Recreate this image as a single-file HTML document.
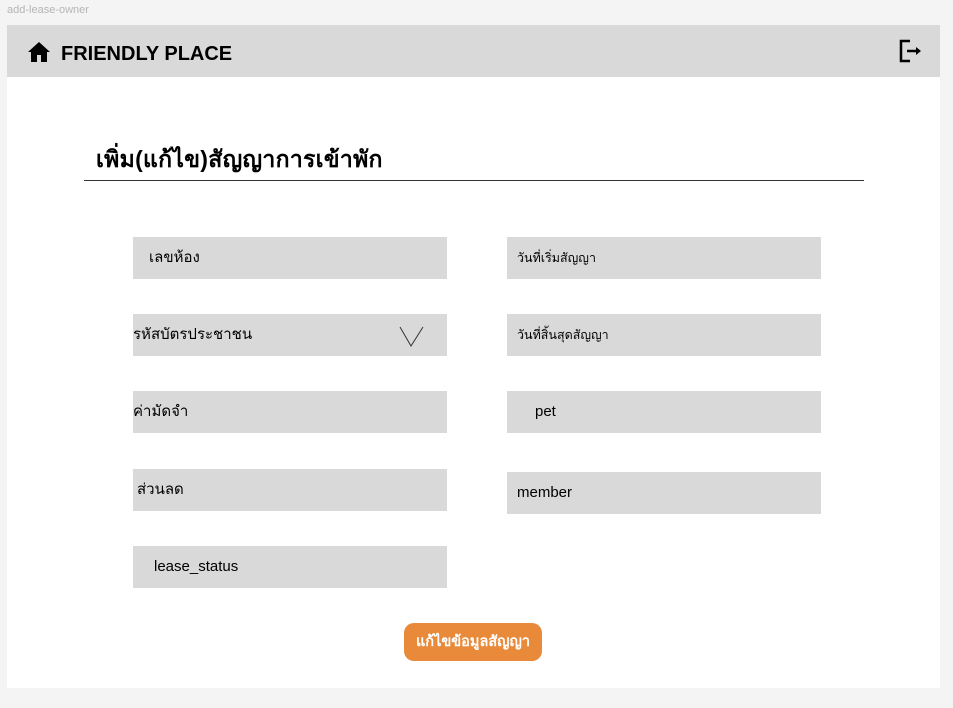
<!DOCTYPE html>
<html><head><meta charset="utf-8"><style>
body{margin:0;width:953px;height:708px;background:#f4f4f4;position:relative;overflow:hidden;font-family:"Liberation Sans","Noto Sans CJK SC",sans-serif;}
.lbl{position:absolute;left:7px;top:4px;font-size:11px;color:#b5b5b5;}
.frame{position:absolute;left:7px;top:25px;width:933px;height:663px;background:#fff;}
.hdr{position:absolute;left:0;top:0;width:933px;height:52px;background:#d9d9d9;}
.brand{position:absolute;left:54px;top:18px;font-size:20px;font-weight:bold;color:#000;}
.title{position:absolute;left:89px;top:117px;font-size:23px;font-weight:bold;color:#000;letter-spacing:0.3px;}
.line{position:absolute;left:77px;top:155px;width:780px;height:1px;background:#333;}
.f{position:absolute;background:#d9d9d9;height:42px;width:314px;font-size:15px;color:#000;line-height:42px;box-sizing:border-box;}
.s{font-size:12.5px;}
.btn{position:absolute;left:397px;top:598px;width:138px;height:38px;background:#e98a3a;border-radius:10px;color:#fff;font-weight:bold;font-size:14.5px;text-align:center;line-height:38px;}
</style></head><body>
<div class="lbl">add-lease-owner</div>
<div class="frame">
<div class="hdr">
<svg style="position:absolute;left:20px;top:16px" width="24" height="22" viewBox="0 0 24 22"><path d="M12 1 L1 11 H4 V21 H10 V14 H14 V21 H20 V11 H23 Z" fill="#000"/></svg>
<div class="brand">FRIENDLY PLACE</div>
<svg style="position:absolute;left:891px;top:14px" width="26" height="24" viewBox="0 0 26 24"><path d="M12 2 H3 V22 H12" fill="none" stroke="#000" stroke-width="2.5"/><path d="M9 12 H21" stroke="#000" stroke-width="2.5"/><path d="M18 8 L23 12 L18 16 Z" fill="#000"/></svg>
</div>
<div class="title">เพิ่ม(แก้ไข)สัญญาการเข้าพัก</div>
<div class="line"></div>
<div class="f" style="left:126px;top:212px;padding-left:16px">เลขห้อง</div>
<div class="f" style="left:126px;top:289px;">รหัสบัตรประชาชน
<svg style="position:absolute;left:266px;top:12px" width="26" height="22"><path d="M1 1 L12 20 L24 1" fill="none" stroke="#333" stroke-width="1"/></svg></div>
<div class="f" style="left:126px;top:366px;">ค่ามัดจำ</div>
<div class="f" style="left:126px;top:444px;padding-left:4px">ส่วนลด</div>
<div class="f" style="left:126px;top:521px;padding-left:21px">lease_status</div>
<div class="f s" style="left:500px;top:212px;padding-left:10px">วันที่เริ่มสัญญา</div>
<div class="f s" style="left:500px;top:289px;padding-left:10px">วันที่สิ้นสุดสัญญา</div>
<div class="f" style="left:500px;top:366px;padding-left:28px">pet</div>
<div class="f" style="left:500px;top:447px;padding-left:10px">member</div>
<div class="btn">แก้ไขข้อมูลสัญญา</div>
</div>
</body></html>
